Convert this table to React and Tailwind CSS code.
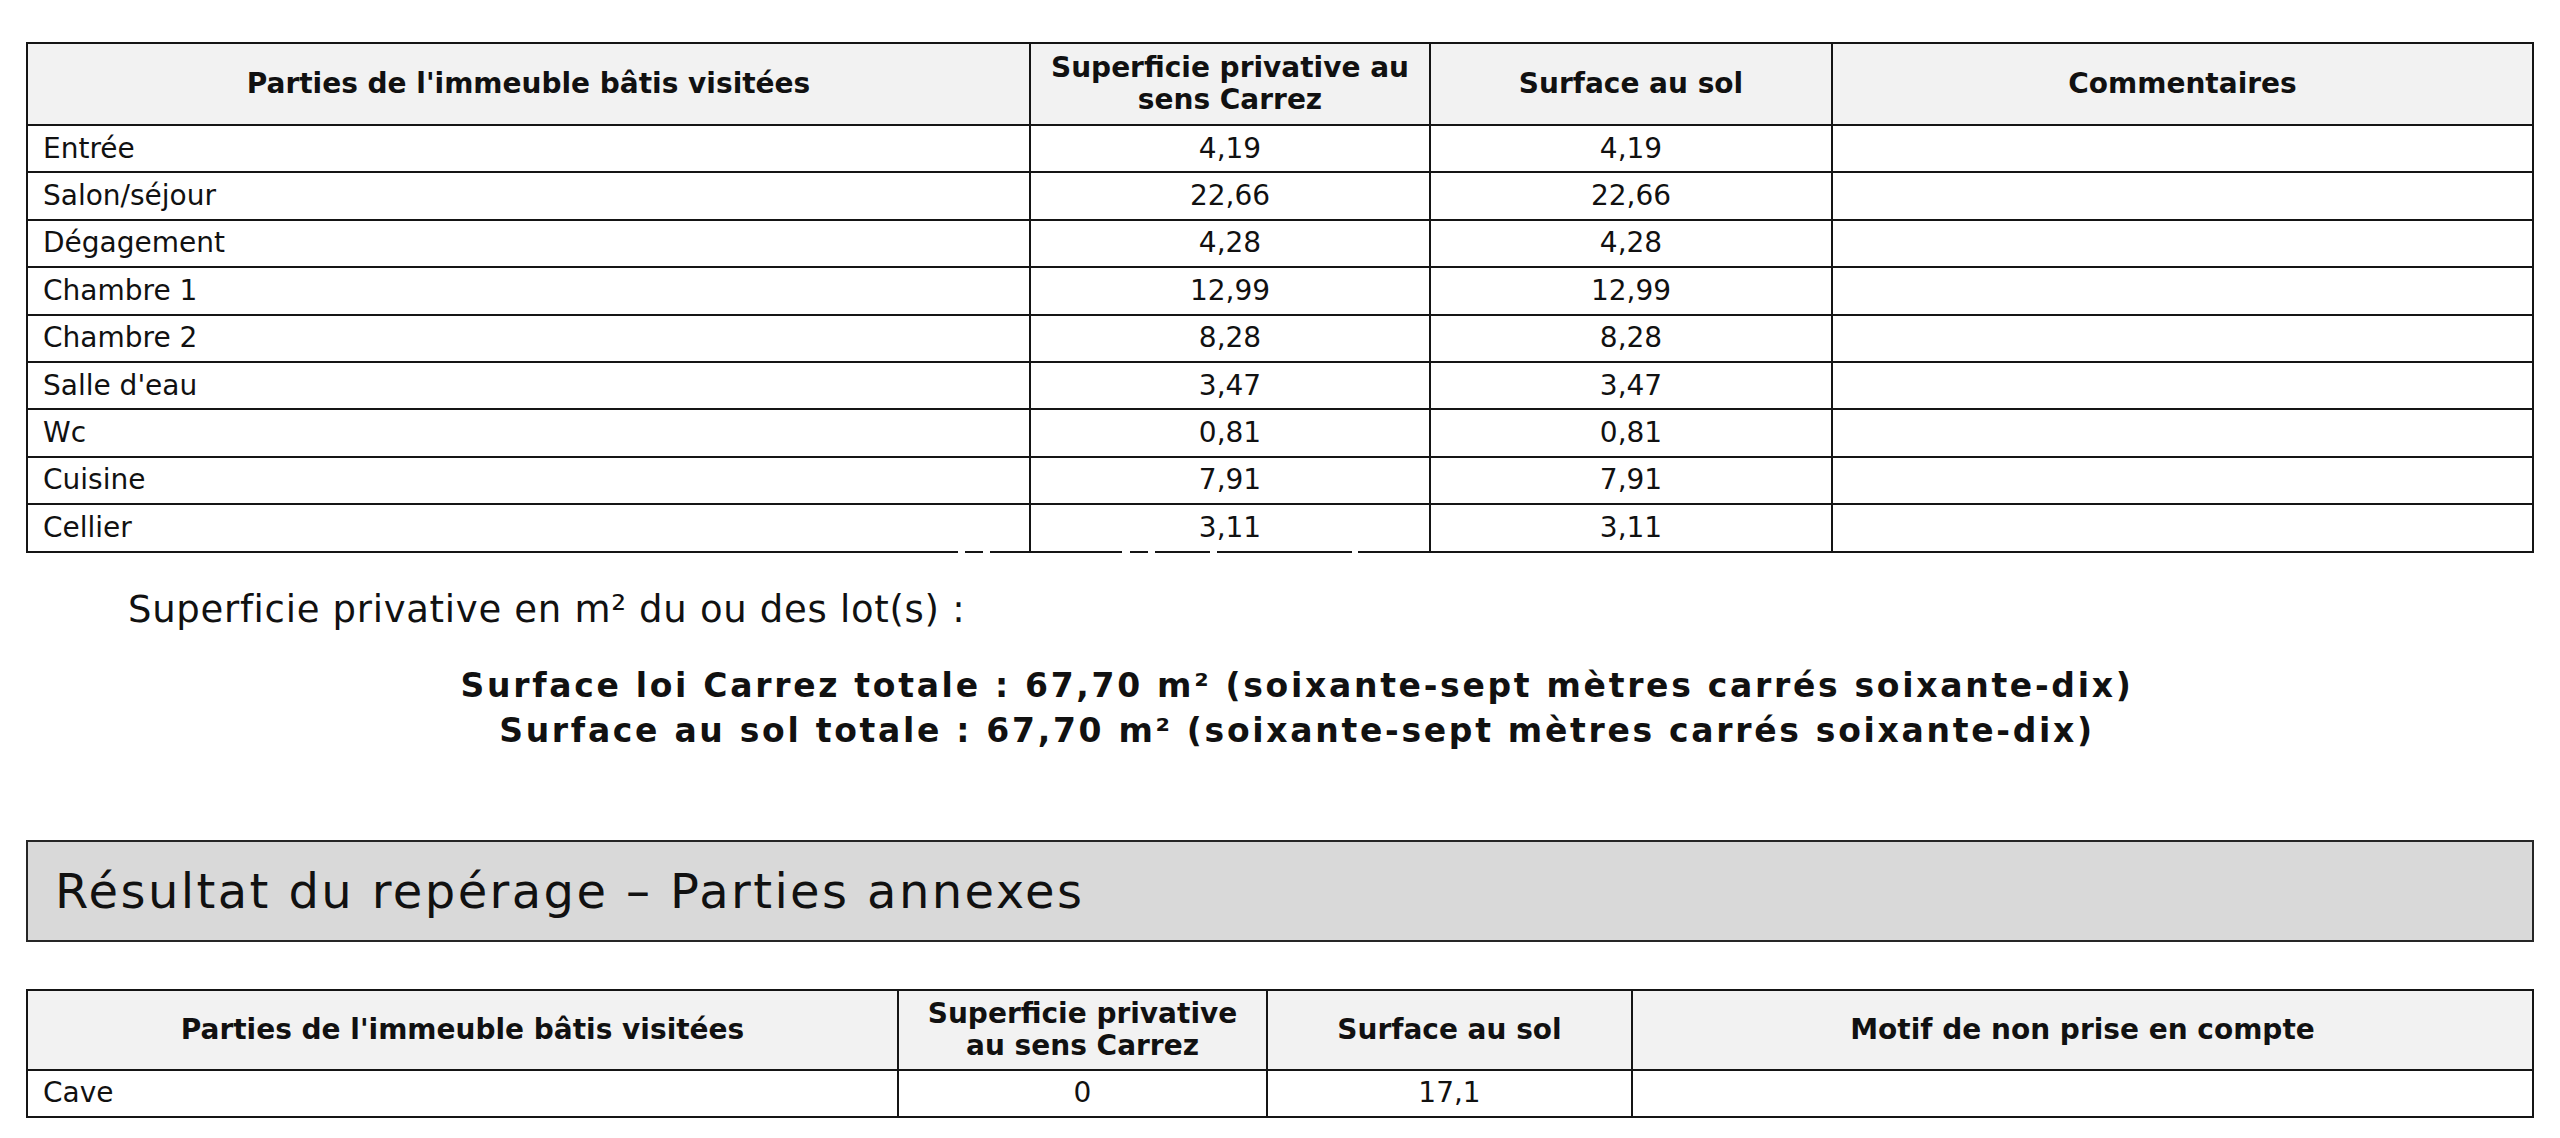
import React from 'react';

const rooms = [
  { name: 'Entrée', carrez: '4,19', sol: '4,19' },
  { name: 'Salon/séjour', carrez: '22,66', sol: '22,66' },
  { name: 'Dégagement', carrez: '4,28', sol: '4,28' },
  { name: 'Chambre 1', carrez: '12,99', sol: '12,99' },
  { name: 'Chambre 2', carrez: '8,28', sol: '8,28' },
  { name: "Salle d'eau", carrez: '3,47', sol: '3,47' },
  { name: 'Wc', carrez: '0,81', sol: '0,81' },
  { name: 'Cuisine', carrez: '7,91', sol: '7,91' },
  { name: 'Cellier', carrez: '3,11', sol: '3,11' },
];

const annexes = [{ name: 'Cave', carrez: '0', sol: '17,1' }];

// small breaks in the bottom rule of the first table (scan artefact)
const gaps = [
  [930, 7], [955, 7], [1094, 8], [1120, 7], [1182, 7], [1324, 6],
];

const App = () => {
  return (
    <div className="w-[2560px] h-[1138px] bg-white text-[#111] font-['DejaVu_Sans',sans-serif] overflow-hidden">
      <div className="pt-[42px] px-[26px]">
        {/* Parties privatives */}
        <div className="border-t-2 border-x-2 border-[#151515]">
          <div className="grid grid-cols-[1003px_400px_402px_699px] h-[82px] bg-[#f2f2f2] border-b-2 border-[#151515] text-[28px] font-bold leading-[32px]">
            <div className="flex items-center justify-center border-r-2 border-[#151515]">Parties de l'immeuble bâtis visitées</div>
            <div className="flex items-center justify-center text-center border-r-2 border-[#151515]">
              Superficie privative au<br />sens Carrez
            </div>
            <div className="flex items-center justify-center border-r-2 border-[#151515]">Surface au sol</div>
            <div className="flex items-center justify-center">Commentaires</div>
          </div>
          {rooms.map((r, i) => (
            <div key={r.name} className="relative grid grid-cols-[1003px_400px_402px_699px] h-[47.4px] border-b-2 border-[#151515] text-[28px]">
              <div className="flex items-center pl-[15px] border-r-2 border-[#151515]">{r.name}</div>
              <div className="flex items-center justify-center border-r-2 border-[#151515]">{r.carrez}</div>
              <div className="flex items-center justify-center border-r-2 border-[#151515]">{r.sol}</div>
              <div></div>
              {i === rooms.length - 1 &&
                gaps.map(([left, width]) => (
                  <span
                    key={left}
                    className="absolute bottom-[-2px] h-[2px] bg-white"
                    style={{ left, width }}
                  />
                ))}
            </div>
          ))}
        </div>

        {/* Totaux */}
        <p className="mt-[35px] ml-[102px] text-[37px] leading-[44px] tracking-[0.7px]">
          Superficie privative en m² du ou des lot(s) :
        </p>
        <div className="mt-[31px] ml-[34px] text-center text-[33px] leading-[45px] font-bold tracking-[2.7px]">
          <p>Surface loi Carrez totale : 67,70 m² (soixante-sept mètres carrés soixante-dix)</p>
          <p>Surface au sol totale : 67,70 m² (soixante-sept mètres carrés soixante-dix)</p>
        </div>

        {/* Parties annexes */}
        <div className="mt-[87px] h-[102px] flex items-center bg-[#d9d9d9] border-2 border-[#262626] pl-[27px] text-[48px] tracking-[2.4px]">
          Résultat du repérage – Parties annexes
        </div>

        <div className="mt-[47px] border-t-2 border-x-2 border-[#151515]">
          <div className="grid grid-cols-[871px_369px_365px_899px] h-[80px] bg-[#f2f2f2] border-b-2 border-[#151515] text-[28px] font-bold leading-[32px]">
            <div className="flex items-center justify-center border-r-2 border-[#151515]">Parties de l'immeuble bâtis visitées</div>
            <div className="flex items-center justify-center text-center border-r-2 border-[#151515]">
              Superficie privative<br />au sens Carrez
            </div>
            <div className="flex items-center justify-center border-r-2 border-[#151515]">Surface au sol</div>
            <div className="flex items-center justify-center">Motif de non prise en compte</div>
          </div>
          {annexes.map((r) => (
            <div key={r.name} className="grid grid-cols-[871px_369px_365px_899px] h-[47px] border-b-2 border-[#151515] text-[28px]">
              <div className="flex items-center pl-[15px] border-r-2 border-[#151515]">{r.name}</div>
              <div className="flex items-center justify-center border-r-2 border-[#151515]">{r.carrez}</div>
              <div className="flex items-center justify-center border-r-2 border-[#151515]">{r.sol}</div>
              <div></div>
            </div>
          ))}
        </div>
      </div>
    </div>
  );
};

export default App;
